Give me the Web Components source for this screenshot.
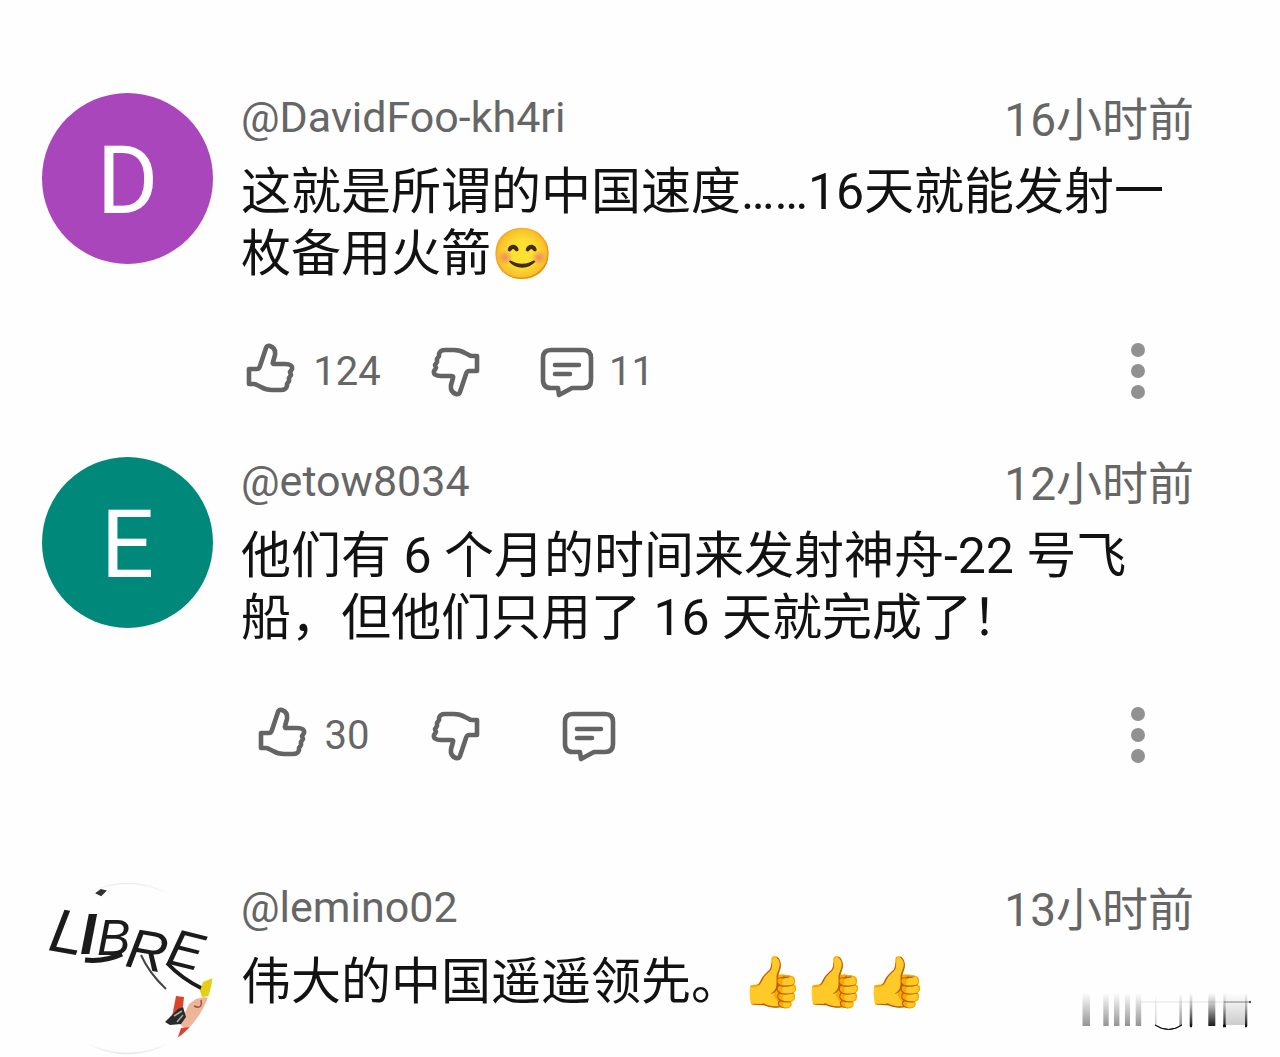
<!DOCTYPE html>
<html lang="zh-CN">
<head>
<meta charset="utf-8">
<meta name="viewport" content="width=device-width, initial-scale=1">
<title>评论</title>
<style>
body{
    margin: 0;
    background: #fefefe;
    color: #121212;
    font-family: Roboto, "Noto Sans CJK SC", "Noto Color Emoji", sans-serif;
}
</style>
</head>
<body>
<comment-list>
    <comment-card data-name="@DavidFoo-kh4ri" data-time="16小时前" data-likes="124" data-replies="11">
        <user-avatar slot="avatar" data-letter="D" style="--avatar-color: #aa46bb"></user-avatar>
        这就是所谓的中国速度……16天就能发射一枚备用火箭😊
    </comment-card>
    <comment-card class="spaced" data-name="@etow8034" data-time="12小时前" data-likes="30">
        <user-avatar slot="avatar" data-letter="E" style="--avatar-color: #00897a"></user-avatar>
        他们有 6 个月的时间来发射神舟-22 号飞船，但他们只用了 16 天就完成了！
    </comment-card>
    <comment-card data-name="@lemino02" data-time="13小时前" data-plain>
        <libre-avatar slot="avatar"></libre-avatar>
        伟大的中国遥遥领先。👍👍👍
    </comment-card>
    <faded-mark slot="mark"></faded-mark>
</comment-list>

<script>
const icons = {
    like: `<path d="M6 28h8q2 0 3-3l6-18q1-3 4-2 6 2 5 9l-2 7q-1 2 2 2h10q8 0 7 5l-2 3 1 3-2 3v3l-2 3v2q-1 4-6 4H29q-6 0-11-3l-4-2q-1-1-3-1H6z"/>`,
    reply: `<path d="M12 9h32q8 0 8 8v22q0 8-8 8H33l-13 7-1-7h-7q-8 0-8-8V17q0-8 8-8z"/><path d="M16 24h24M16 33h15"/>`
};
icons.dislike = `<g transform="rotate(180 28 29)">${icons.like}</g>`;

// page column
class CommentList extends HTMLElement{
    constructor(){
        super();
        this.attachShadow({mode: "open"});
        this.shadowRoot.innerHTML = `
<style>
:host{
    display: block;
    position: relative;
}
main{
    display: flex;
    flex-direction: column;
    gap: 56px;
    padding: 93px 86px 4px 42px;
}
::slotted(.spaced){
    margin-bottom: 62px;
}
::slotted([slot="mark"]){
    position: absolute;
    right: 28px;
    bottom: 24px;
}
</style>
<main><slot></slot></main>
<slot name="mark"></slot>
`;
    }
}
customElements.define('comment-list', CommentList);

// round avatar with one letter
class UserAvatar extends HTMLElement{
    constructor(){
        super();
        this.attachShadow({mode: "open"});
    }

    connectedCallback(){
        this.shadowRoot.innerHTML = `
<style>
:host{
    display: flex;
    align-items: center;
    justify-content: center;
    box-sizing: border-box;
    width: 171px;
    height: 171px;
    padding-top: 4px;
    border-radius: 50%;
    background: var(--avatar-color, #888);
    color: white;
    font-size: 94px;
    line-height: 1;
}
</style>
<span>${this.getAttribute('data-letter')}</span>
`;
    }
}
customElements.define('user-avatar', UserAvatar);

// hand lettered avatar
class LibreAvatar extends HTMLElement{
    constructor(){
        super();
        this.attachShadow({mode: "open"});
        this.shadowRoot.innerHTML = `
<style>
:host{
    display: block;
    width: 171px;
    height: 171px;
}
svg{
    display: block;
    overflow: visible;
}
text{
    font-family: "Liberation Sans", sans-serif;
    font-style: italic;
    fill: #1b1b1b;
}
</style>
<svg width="171" height="171" viewBox="0 0 171 171" role="img" aria-label="LIBRE">
    <defs>
        <clipPath id="round"><circle cx="85.5" cy="85.5" r="85.5"/></clipPath>
        <linearGradient id="rim" x1="0" y1="0" x2="0" y2="1">
            <stop offset="0" stop-color="#ececec"/>
            <stop offset=".06" stop-color="#fefefe"/>
            <stop offset=".94" stop-color="#fefefe"/>
            <stop offset="1" stop-color="#e8e8e8"/>
        </linearGradient>
    </defs>
    <circle cx="85.5" cy="85.5" r="85" fill="#fefefe" stroke="url(#rim)" stroke-width="1.5"/>
    <path d="M55 10l4-3 4 1-4 4z" fill="#333" stroke="#333" stroke-width="2"/>
    <text x="5" y="67" font-size="62" transform="rotate(10 5 67)">L</text>
    <text x="38" y="71" font-size="58" font-weight="bold">I</text>
    <text x="55" y="72" font-size="50">B</text>
    <path d="M43 77q20 2 37-6" fill="none" stroke="#1b1b1b" stroke-width="5"/>
    <text x="82" y="83" font-size="56" transform="rotate(10 82 83)">R</text>
    <path d="M99 72q8 18 25 34" fill="none" stroke="#444" stroke-width="2"/>
    <text x="123" y="80" font-size="52" transform="rotate(14 123 80)">E</text>
    <g clip-path="url(#round)">
        <path d="M125 80q15 16 36 26" fill="none" stroke="#1b1b1b" stroke-width="4"/>
        <path d="M171 95l-10 4-3 9 2 6 8-1 3-5z" fill="#e5cf16"/>
        <path d="M134 113l8 1-1 9-4 9-7 2z" fill="#d9452a"/>
        <path d="M147 121l7-5 8-2 6 1-4 13-10 15-11 3-5-5z" fill="#efb59a"/>
        <path d="M152 123q9 4 7-6" fill="none" stroke="#8f5a45" stroke-width="1.5"/>
        <path d="M123 139l13-13 5-2 3 10-5 7-11 1z" fill="#2a2a2a"/>
        <path d="M132 133l8-5M135 139l6-7" stroke="#a5aaa8" stroke-width="1.5"/>
        <path d="M139 145l10-1 3-4-6 9-11 8z" fill="#df4030"/>
    </g>
</svg>
`;
    }
}
customElements.define('libre-avatar', LibreAvatar);

// icon with an optional count
class ActionButton extends HTMLElement{
    constructor(){
        super();
        this.attachShadow({mode: "open"});
    }

    connectedCallback(){
        this.render();
    }

    render(){
        const icon = this.getAttribute('data-icon');
        const count = this.getAttribute('data-count') ? this.getAttribute('data-count') : "";
        const label = this.getAttribute('data-label');

        this.shadowRoot.innerHTML = `
<style>
:host{
    display: block;
}
button{
    display: flex;
    align-items: center;
    justify-content: center;
    gap: 14px;
    width: 100%;
    height: 60px;
    padding: 0;
    border: 0;
    background: none;
    color: #666;
    font: inherit;
    font-size: 40px;
    cursor: pointer;
}
svg{
    flex: none;
    fill: none;
    stroke: #646464;
    stroke-width: 4.6;
    stroke-linecap: round;
    stroke-linejoin: round;
}
</style>
<button type="button" aria-label="${label} ${count}">
    <svg width="56" height="60" viewBox="0 0 56 60" aria-hidden="true">${icons[icon]}</svg>
    ${count ? `<span>${count}</span>` : ""}
</button>
`;
    }
}
customElements.define('action-button', ActionButton);

class MoreButton extends HTMLElement{
    constructor(){
        super();
        this.attachShadow({mode: "open"});
        this.shadowRoot.innerHTML = `
<style>
:host{
    display: block;
}
button{
    display: flex;
    flex-direction: column;
    align-items: center;
    justify-content: center;
    gap: 7px;
    width: 112px;
    height: 60px;
    padding: 0;
    border: 0;
    background: none;
    cursor: pointer;
}
i{
    width: 14px;
    height: 14px;
    border-radius: 50%;
    background: #919191;
}
</style>
<button type="button" aria-label="更多"><i></i><i></i><i></i></button>
`;
    }
}
customElements.define('more-button', MoreButton);

class CommentCard extends HTMLElement{
    constructor(){
        super();
        this.attachShadow({mode: "open"});
    }

    connectedCallback(){
        this.render();
    }

    // data-plain leaves the action row out
    render(){
        const name = this.getAttribute('data-name');
        const time = this.getAttribute('data-time');
        const likes = this.getAttribute('data-likes');
        const replies = this.getAttribute('data-replies') ? this.getAttribute('data-replies') : "";
        const actions = `
<footer>
    <action-button class="like" data-icon="like" data-label="赞" data-count="${likes}"></action-button>
    <action-button data-icon="dislike" data-label="踩"></action-button>
    <action-button class="${replies ? "reply" : "reply empty"}" data-icon="reply" data-label="回复" data-count="${replies}"></action-button>
    <more-button></more-button>
</footer>`;

        this.shadowRoot.innerHTML = `
<style>
:host{
    display: block;
}
article{
    display: grid;
    grid-template-columns: 171px 1fr;
    column-gap: 28px;
    align-items: start;
}
header{
    display: flex;
    align-items: flex-start;
    justify-content: space-between;
    height: 52px;
    margin-bottom: 16px;
    color: #666;
}
a{
    color: inherit;
    font-size: 43px;
    line-height: 48px;
    text-decoration: none;
}
time{
    font-size: 46px;
    line-height: 54px;
}
p{
    margin: 0;
    font-size: 50px;
    line-height: 62px;
}
footer{
    display: flex;
    align-items: center;
    gap: 44px;
    margin-top: 56px;
}
.like{
    width: 142px;
}
.reply{
    margin-left: 12px;
}
.empty{
    padding: 0 22px;
}
more-button{
    margin-left: auto;
}
</style>
<article>
    <slot name="avatar"></slot>
    <div>
        <header><a href="#${name}">${name}</a><time>${time}</time></header>
        <p><slot></slot></p>
        ${this.hasAttribute('data-plain') ? "" : actions}
    </div>
</article>
`;
    }
}
customElements.define('comment-card', CommentCard);

// faint strip in the corner, fades out towards its top
class FadedMark extends HTMLElement{
    constructor(){
        super();
        this.attachShadow({mode: "open"});
        this.shadowRoot.innerHTML = `
<style>
:host{
    display: block;
    pointer-events: none;
}
svg{
    display: block;
}
</style>
<svg width="172" height="44" viewBox="0 0 172 44" aria-hidden="true">
    <defs>
        <linearGradient id="soft" x1="0" y1="0" x2="0" y2="1">
            <stop offset="0" stop-color="#000" stop-opacity="0"/>
            <stop offset="1" stop-color="#000" stop-opacity=".42"/>
        </linearGradient>
        <linearGradient id="dark" x1="0" y1="0" x2="0" y2="1">
            <stop offset="0" stop-color="#000" stop-opacity="0"/>
            <stop offset=".4" stop-color="#000" stop-opacity=".3"/>
            <stop offset="1" stop-color="#000" stop-opacity=".9"/>
        </linearGradient>
        <linearGradient id="pale" x1="0" y1="0" x2="0" y2="1">
            <stop offset="0" stop-color="#000" stop-opacity="0"/>
            <stop offset="1" stop-color="#000" stop-opacity=".2"/>
        </linearGradient>
    </defs>
    <g fill="url(#soft)">
        <rect x="2.5" y="3" width="7.5" height="33"/>
        <rect x="23.3" y="3" width="5.4" height="33"/>
        <rect x="34" y="3" width="5.4" height="33"/>
        <rect x="45" y="3" width="5" height="33"/>
        <rect x="55.7" y="3" width="5.5" height="33"/>
        <rect x="99.3" y="3" width="2.7" height="33"/>
    </g>
    <rect x="75" y="3" width="1.5" height="32" fill="url(#pale)"/>
    <rect x="145.7" y="3" width="19.3" height="32" fill="url(#pale)"/>
    <g fill="url(#dark)">
        <rect x="109.7" y="3" width="2.6" height="33"/>
        <rect x="128.3" y="3" width="7" height="33"/>
        <rect x="143.3" y="3" width="2.4" height="33"/>
        <rect x="165" y="3" width="2.3" height="33"/>
    </g>
    <path d="M75 35q13 9 27 0-13 9-27 0z" fill="#111" stroke="#111"/>
    <path d="M110 36h2M143 36h3M165 36h2" stroke="#111" stroke-width="2.5"/>
    <path d="M60 12h111" stroke="#000" stroke-opacity=".1"/>
    <path d="M144 12h26" stroke="#000" stroke-opacity=".25" stroke-width="1.5"/>
    <circle cx="170" cy="12" r="1.2" fill="#555"/>
</svg>
`;
    }
}
customElements.define('faded-mark', FadedMark);
</script>
</body>
</html>
